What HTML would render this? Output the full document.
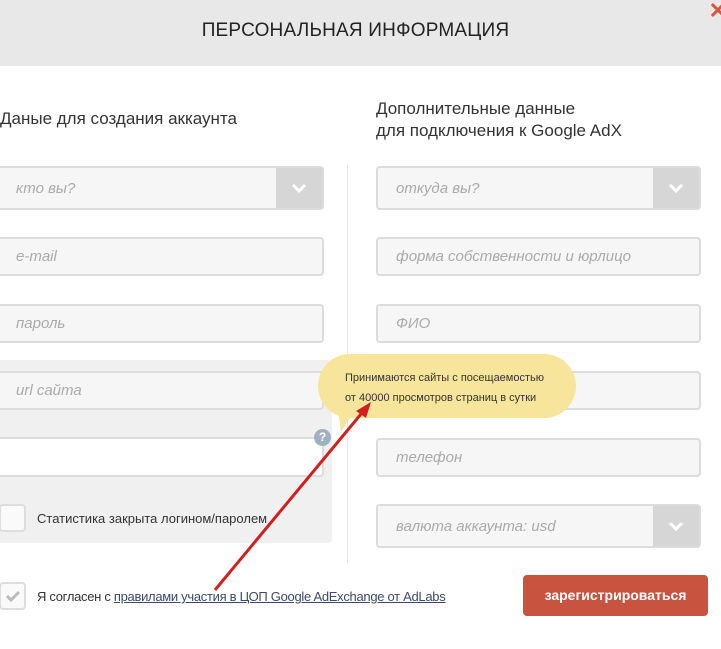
<!DOCTYPE html>
<html><head><meta charset="utf-8"><style>
*{box-sizing:border-box;margin:0;padding:0}
body{width:721px;height:649px;background:#fff;font-family:"Liberation Sans",sans-serif;position:relative;overflow:hidden;color:#333}
.hdr{position:absolute;left:0;top:0;width:721px;height:66px;background:#e8e8e8}
.hdr h1{position:absolute;left:0;right:10px;top:20px;text-align:center;font-weight:normal;font-size:19px;color:#222;letter-spacing:.2px}
.x{position:absolute;right:-6px;top:-2px;color:#d9553e;font-size:22px;font-weight:bold}
.lbl{position:absolute;font-size:17px;color:#333;line-height:22px}
.in{position:absolute;background:#f6f6f6;border:2px solid #dcdcdc;border-radius:4px;font-style:italic;color:#aaa;font-size:15px;padding-left:18px;display:flex;align-items:center}
.sel .arr{position:absolute;right:0;top:0;bottom:0;width:46px;background:#d6d6d6;display:flex;align-items:center;justify-content:center}
.panel{position:absolute;left:0;top:360px;width:332px;height:183px;background:#f0f0f0;border-radius:0 4px 4px 0}
.div{position:absolute;left:347px;top:165px;width:1px;height:398px;background:#e6e6e6}
.cb{position:absolute;width:27px;height:28px;border:2px solid #ddd;border-radius:4px;background:#fafafa}
.t{position:absolute;font-size:13px;color:#333}
.bub{position:absolute;left:318px;top:354px;width:258px;height:64px;background:#f7e59b;border-radius:32px;font-size:11px;color:#333;padding:14px 0 0 27px;line-height:20px}
.btn{position:absolute;left:523px;top:575px;width:185px;height:41px;background:#c8533f;border-radius:4px;color:#fff;font-weight:bold;font-size:14px;text-align:center;line-height:41px}
</style></head><body>
<div class="hdr"><h1>ПЕРСОНАЛЬНАЯ ИНФОРМАЦИЯ</h1><div class="x">✕</div></div>
<div class="lbl" style="left:0;top:108px">Даные для создания аккаунта</div>
<div class="lbl" style="left:376px;top:98px">Дополнительные данные<br>для подключения к Google AdX</div>
<div class="panel"></div>
<div class="div"></div>
<div class="in sel" style="left:-4px;top:166px;width:328px;height:44px">кто вы?<div class="arr"><svg width="16" height="12"><path d="M2 3l6 6 6-6" stroke="#fff" stroke-width="3" fill="none"/></svg></div></div>
<div class="in" style="left:-4px;top:237px;width:328px;height:39px">e-mail</div>
<div class="in" style="left:-4px;top:304px;width:328px;height:39px">пароль</div>
<div class="in" style="left:-4px;top:371px;width:328px;height:39px">url сайта</div>
<div class="in" style="left:-4px;top:437px;width:328px;height:40px;background:#fff"></div>
<div style="position:absolute;left:314px;top:429px;width:17px;height:17px;border-radius:50%;background:#9fb1bf;color:#fff;font-size:12px;font-weight:bold;text-align:center;line-height:17px">?</div>
<div class="cb" style="left:-1px;top:504px"></div>
<div class="t" style="left:37px;top:511px">Статистика закрыта логином/паролем</div>
<div class="in sel" style="left:376px;top:166px;width:325px;height:44px">откуда вы?<div class="arr"><svg width="16" height="12"><path d="M2 3l6 6 6-6" stroke="#fff" stroke-width="3" fill="none"/></svg></div></div>
<div class="in" style="left:376px;top:237px;width:325px;height:39px">форма собственности и юрлицо</div>
<div class="in" style="left:376px;top:304px;width:325px;height:39px">ФИО</div>
<div class="in" style="left:376px;top:371px;width:325px;height:39px"></div>
<div class="in" style="left:376px;top:438px;width:325px;height:39px">телефон</div>
<div class="in sel" style="left:376px;top:504px;width:325px;height:44px">валюта аккаунта: usd<div class="arr"><svg width="16" height="12"><path d="M2 3l6 6 6-6" stroke="#fff" stroke-width="3" fill="none"/></svg></div></div>
<div class="bub">Принимаются сайты с посещаемостью<br>от 40000 просмотров страниц в сутки</div>
<svg style="position:absolute;left:0;top:0" width="721" height="649"><path d="M338 410 L355 410 L341 432 Z" fill="#f7e59b"/><line x1="215" y1="590" x2="366" y2="408" stroke="#d11f1f" stroke-width="3"/><path d="M371 402 L356 411 L366 418 Z" fill="#d11f1f"/></svg>
<div class="cb" style="left:-1px;top:582px;display:flex;align-items:center;justify-content:center"><svg width="16" height="12"><path d="M2 6l4 4 8-8" stroke="#bbb" stroke-width="3" fill="none"/></svg></div>
<div class="t" style="left:37px;top:589px;letter-spacing:-0.3px">Я согласен с <u style="color:#3a4a6a">правилами участия в ЦОП Google AdExchange от AdLabs</u></div>
<div class="btn">зарегистрироваться</div>
</body></html>
